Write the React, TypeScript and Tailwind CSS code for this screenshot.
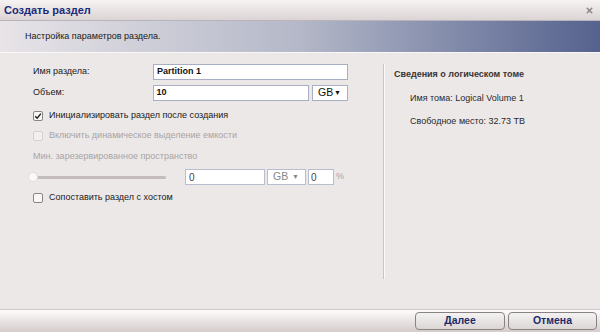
import { X } from "lucide-react";

const font = { fontFamily: '"Liberation Sans", Arial, sans-serif' };

const Checkbox = ({ checked, disabled }: { checked?: boolean; disabled?: boolean }) => (
  <span
    className={`flex size-[10px] items-center justify-center rounded-[2px] border ${
      disabled ? "border-[#d6d0d0] bg-[#f2efef]" : "border-[#8a8484] bg-[#f8f6f6]"
    }`}
  >
    {checked && (
      <svg viewBox="0 0 10 10" className="size-[8px]">
        <path d="M1.5 5.2 L4 7.8 L8.6 2" fill="none" stroke="#222" strokeWidth="1.8" />
      </svg>
    )}
  </span>
);

const Select = ({ w, disabled }: { w: string; disabled?: boolean }) => (
  <div
    className={`flex h-[16px] items-center justify-between border bg-white pl-[5px] pr-[6px] text-[10.5px] ${w} ${
      disabled ? "border-[#b8bed0] text-[#888]" : "border-[#a8aec4] text-[#111]"
    }`}
  >
    <span>GB</span>
    <span className={`text-[7px] ${disabled ? "text-[#888]" : "text-[#111]"}`}>▼</span>
  </div>
);

export default function App() {
  return (
    <div className="flex h-[332px] w-[600px] flex-col overflow-hidden bg-[#ece8e8]" style={font}>
      <div className="flex h-[20px] items-center justify-between bg-gradient-to-b from-[#f6f3f3] to-[#dcd4d4] pl-[4px] pr-[6px]">
        <span className="text-[11px] font-bold text-[#1b2a7a]">Создать раздел</span>
        <X className="size-[9px] text-[#8a8888]" strokeWidth={4} />
      </div>
      <div className="flex h-[32px] items-center border-t border-[#b8b4bc] bg-gradient-to-r from-[#e8e4e8] via-[#b4b8c8] to-[#56628e] pl-[25px] text-[9px] text-[#1a1a1a]">
        Настройка параметров раздела.
      </div>
      <div className="h-[1px] bg-[#f8f6f6]" />
      <div className="flex flex-1 pt-[11px]">
        <div className="flex w-[383px] flex-col pl-[30px] pr-[35px] text-[9px] text-[#1a1a1a]">
          <div className="flex h-[21px] items-start">
            <span className="flex h-[16px] w-[123px] items-center pl-[3px]">Имя раздела:</span>
            <div className="flex h-[16px] flex-1 items-center border border-[#a8aec4] bg-white px-[3px] text-[9px] font-bold text-[#111]">
              Partition 1
            </div>
          </div>
          <div className="flex h-[20px] items-start">
            <span className="flex h-[16px] w-[123px] items-center pl-[3px]">Объем:</span>
            <div className="flex h-[16px] w-[157px] items-center border border-[#a8aec4] bg-white px-[3px] text-[9px] font-bold text-[#111]">
              10
            </div>
            <div className="ml-[3px]">
              <Select w="w-[36px]" />
            </div>
          </div>
          <div className="flex h-[21px] items-center gap-[6px] pl-[3px]">
            <Checkbox checked />
            <span>Инициализировать раздел после создания</span>
          </div>
          <div className="flex h-[20px] items-center gap-[6px] pl-[3px] text-[#a8a4a4]">
            <Checkbox disabled />
            <span>Включить динамическое выделение емкости</span>
          </div>
          <div className="flex h-[21px] items-center pl-[3px] text-[#a8a4a4]">
            Мин. зарезервированное пространство
          </div>
          <div className="flex h-[20px] items-center">
            <div className="relative flex w-[136px] items-center">
              <div className="ml-[4px] h-[3px] flex-1 rounded-full bg-[#c4bcbc]" />
              <span className="absolute left-[-2px] top-[-4px] size-[10px] rounded-full border border-[#e2dcdc] bg-[#faf8f8]" />
            </div>
            <div className="ml-[19px] flex h-[16px] w-[80px] items-center border border-[#b8bed0] bg-white px-[3px] text-[10px] text-[#444]">
              0
            </div>
            <div className="ml-[2px]">
              <Select w="w-[39px]" disabled />
            </div>
            <div className="ml-[2px] flex h-[16px] w-[26px] items-center border border-[#b8bed0] bg-white px-[2px] text-[10px] text-[#444]">
              0
            </div>
            <span className="ml-[2px] text-[9px] text-[#a8a4a4]">%</span>
          </div>
          <div className="flex h-[21px] items-center gap-[6px] pl-[3px]">
            <Checkbox />
            <span>Сопоставить раздел с хостом</span>
          </div>
        </div>
        <div className="mb-[30px] w-[1px] bg-[#c8c4c4] shadow-[1px_0_0_#fbfafa]" />
        <div className="flex flex-col pl-[10px] text-[9px] text-[#2a2a2a]">
          <div className="flex h-[21px] items-center font-bold text-[#3a3434]">Сведения о логическом томе</div>
          <div className="mt-[2px] flex h-[23px] items-center pl-[16px]">Имя тома: Logical Volume 1</div>
          <div className="flex h-[23px] items-center pl-[16px]">Свободное место: 32.73 TB</div>
        </div>
      </div>
      <div className="flex h-[23px] items-center justify-end gap-[3px] border-t border-[#cfc6c6] bg-gradient-to-b from-[#fdfcfc] to-[#d6cccc] pr-[3px]">
        <button className="h-[18px] w-[90px] rounded-[4px] border border-[#8a8282] bg-gradient-to-b from-[#f4f2f2] to-[#dcd6d6] text-[10.5px] font-bold text-[#1b2a6a]">
          Далее
        </button>
        <button className="h-[18px] w-[89px] rounded-[4px] border border-[#8a8282] bg-gradient-to-b from-[#f4f2f2] to-[#dcd6d6] text-[10.5px] font-bold text-[#1b2a6a]">
          Отмена
        </button>
      </div>
    </div>
  );
}
